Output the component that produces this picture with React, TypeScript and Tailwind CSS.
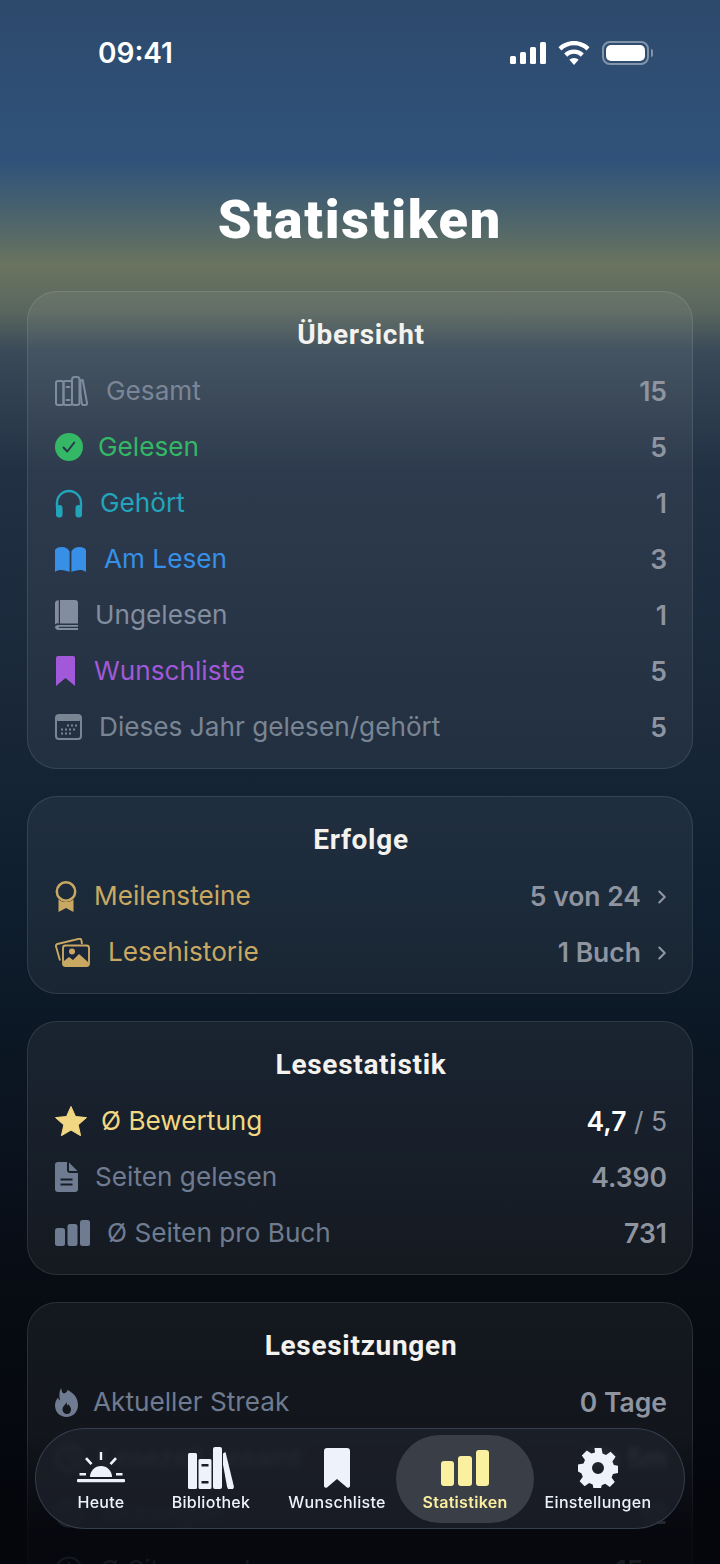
import * as React from "react";
import { ChevronRight } from "lucide-react";

const BooksOutline = () => (
  <svg viewBox="0 0 33 30" className="h-[30px] w-[33px] text-[#7f8c9f]" fill="none" stroke="currentColor" strokeWidth="2" strokeLinejoin="round" strokeLinecap="round">
    <rect x="1" y="5" width="7.500" height="24" rx="2" />
    <rect x="8.500" y="5" width="8.500" height="24" rx="2" />
    <rect x="17" y="1" width="7.500" height="28" rx="2.500" />
    <path d="M25.500 4.500l2.200-.6 4.500 24-1 1h-3.500l-1-1.500L25.500 17z" />
    <path d="M11.500 11h3M11.500 24h3" />
  </svg>
);

const CheckCircle = () => (
  <svg viewBox="0 0 28 28" className="h-7 w-7">
    <circle cx="14" cy="14" r="14" fill="#34b866" />
    <path d="M8.500 14.500l3.800 4 7-9" fill="none" stroke="#27384a" strokeWidth="2" strokeLinecap="round" strokeLinejoin="round" />
  </svg>
);

const Headphones = () => (
  <svg viewBox="0 0 28 29" className="h-[29px] w-7">
    <path d="M2 19v-5a12 12 0 0 1 24 0v5" fill="none" stroke="currentColor" strokeWidth="2.400" />
    <rect x="1" y="16" width="6.500" height="12.500" rx="3" fill="currentColor" />
    <rect x="20.500" y="16" width="6.500" height="12.500" rx="3" fill="currentColor" />
  </svg>
);

const BookOpen = () => (
  <svg viewBox="0 0 31 25" className="h-[25px] w-[31px]" fill="currentColor">
    <path d="M14.600 4.500C13.500 1.800 10.500 0 6.500 0 3.500 0 1 1 0 3V25c2-1.500 3.700-2 5.800-2 3.500 0 6.700 1 8.800 2z" />
    <path d="M16.400 4.500C17.500 1.800 20.500 0 24.500 0c3 0 5.500 1 6.500 3V25c-2-1.500-3.700-2-5.800-2-3.500 0-6.700 1-8.800 2z" />
  </svg>
);

const BookClosed = () => (
  <svg viewBox="0 0 23 30" className="h-[30px] w-[23px]" fill="currentColor">
    <path d="M5 0h15a3 3 0 0 1 3 3v20.500H5V0z" />
    <path d="M3.800.2V23.500A3.500 3.500 0 0 0 0 24.500V3.500A3.500 3.500 0 0 1 3.800.2z" />
    <path d="M3.500 25h19.500v1.800H4a1.200 1.200 0 0 0 0 1.200h19V30H3.500A3.500 3.500 0 0 1 0 27c0-1 1.500-2 3.500-2z" />
  </svg>
);

const BookmarkIcon = () => (
  <svg viewBox="0 0 19 30" className="ml-[1px] h-[30px] w-[19px]" fill="currentColor">
    <path d="M2 0h15a2 2 0 0 1 2 2v28l-9.500-8L0 30V2a2 2 0 0 1 2-2z" />
  </svg>
);

const CalendarIcon = () => (
  <svg viewBox="0 0 27 26" className="h-[26px] w-[27px]">
    <rect x="1" y="1" width="25" height="24" rx="3" fill="none" stroke="currentColor" strokeWidth="2" />
    <rect x="1" y="1" width="25" height="6" rx="2" fill="currentColor" />
    <g fill="currentColor">
      <rect x="12" y="10.500" width="2" height="2" /><rect x="16" y="10.500" width="2" height="2" /><rect x="20" y="10.500" width="2" height="2" />
      <rect x="6" y="14.500" width="2" height="2" /><rect x="10" y="14.500" width="2" height="2" /><rect x="14" y="14.500" width="2" height="2" /><rect x="18" y="14.500" width="2" height="2" />
      <rect x="6" y="18.500" width="2" height="2" /><rect x="10" y="18.500" width="2" height="2" /><rect x="14" y="18.500" width="2" height="2" />
    </g>
  </svg>
);

const Medal = () => (
  <svg viewBox="0 0 22 31" className="h-[31px] w-[22px]" fill="currentColor">
    <circle cx="11" cy="10.500" r="9.200" fill="none" stroke="currentColor" strokeWidth="2.500" />
    <path d="M3.500 18.500c2.200 1.700 4.700 2.500 7.500 2.500s5.300-.8 7.500-2.500v12.500L11 27l-7.500 4z" />
  </svg>
);

const Photos = () => (
  <svg viewBox="0 0 35 29" className="h-[29px] w-[35px]">
    <path d="M5 22.500 1 8.500a2 2 0 0 1 1.400-2.500L24 .8a2 2 0 0 1 2.400 1.400L27 6" fill="none" stroke="currentColor" strokeWidth="1.900" />
    <rect x="8" y="7.500" width="26" height="20.500" rx="2.500" fill="#1a2639" stroke="currentColor" strokeWidth="1.900" />
    <circle cx="17" cy="13.500" r="3" fill="currentColor" />
    <path d="M9 27v-4l5-4 4 3 6-6 9 8v3z" fill="currentColor" />
  </svg>
);

const Star = () => (
  <svg viewBox="0 0 32 30" className="h-[30px] w-8" fill="currentColor">
    <path d="M16 .5l4.500 10 11 1.100-8.300 7.300 2.400 10.800L16 24.100 6.400 29.700l2.400-10.800L.5 11.600l11-1.100z" stroke="currentColor" strokeLinejoin="round" />
  </svg>
);

const DocIcon = () => (
  <svg viewBox="0 0 23 30" className="h-[30px] w-[23px]" fill="currentColor">
    <path fillRule="evenodd" d="M3 0h9v8a3 3 0 0 0 3 3h8v16a3 3 0 0 1-3 3H3a3 3 0 0 1-3-3V3a3 3 0 0 1 3-3zM5.500 16.500v2h12v-2zM5.500 21.500v2h12v-2z" />
    <path d="M14 .5 22.500 9H15a1 1 0 0 1-1-1z" />
  </svg>
);

const BarsIcon = () => (
  <svg viewBox="0 0 35 26" className="h-[26px] w-[35px]" fill="currentColor">
    <rect x="0" y="8" width="10" height="18" rx="2.500" />
    <rect x="12.500" y="4" width="10" height="22" rx="2.500" />
    <rect x="25" y="0" width="10" height="26" rx="2.500" />
  </svg>
);

const Flame = () => (
  <svg viewBox="0 0 23 29" className="h-[29px] w-[23px]">
    <path fillRule="evenodd" fill="currentColor" d="M6 0c1 3 .5 4.500 3 5.500C13 4 12 2 12.500 2 19 5 23 10 23 17c0 7-5 12-11.500 12S0 24 0 17.500c0-3 1-5.500 3-8 .5 1.500 1 2.500 2 3C4 8 4 4 6 0zM11.500 14c-.5 2.500-4 4-4 7.500 0 2.500 2 4.500 4.500 4.500s4-2 4-4.500c0-3-2-3.500-2.500-5.500-.5 1-1 1.500-1.500 1.500 0-1-.2-2.500-.5-3.500z" />
  </svg>
);

const ClockIcon = () => (
  <svg viewBox="0 0 28 28" className="h-7 w-7" fill="none" stroke="currentColor" strokeWidth="2.200" strokeLinecap="round">
    <circle cx="14" cy="14" r="12.500" />
    <path d="M14 7v7l5 3" />
  </svg>
);

type Row = {
  icon: React.ReactNode;
  label: string;
  value: React.ReactNode;
  color: string;
  gap: string;
  chevron?: boolean;
};

const overview: Row[] = [
  { icon: <BooksOutline />, label: "Gesamt", value: "15", color: "text-[#7a8698]", gap: "gap-[18px]" },
  { icon: <CheckCircle />, label: "Gelesen", value: "5", color: "text-[#34b866]", gap: "gap-[15px]" },
  { icon: <Headphones />, label: "Gehört", value: "1", color: "text-[#22a5ba]", gap: "gap-[17px]" },
  { icon: <BookOpen />, label: "Am Lesen", value: "3", color: "text-[#378fe6]", gap: "gap-[18px]" },
  { icon: <BookClosed />, label: "Ungelesen", value: "1", color: "text-[#828d9e]", gap: "gap-[17px]" },
  { icon: <BookmarkIcon />, label: "Wunschliste", value: "5", color: "text-[#a259d9]", gap: "gap-[19px]" },
  { icon: <CalendarIcon />, label: "Dieses Jahr gelesen/gehört", value: "5", color: "text-[#7a8593]", gap: "gap-[17px]" },
];

const achievements: Row[] = [
  { icon: <Medal />, label: "Meilensteine", value: "5 von 24", color: "text-[#c9a862]", gap: "gap-[17px]", chevron: true },
  { icon: <Photos />, label: "Lesehistorie", value: "1 Buch", color: "text-[#c9a862]", gap: "gap-[18px]", chevron: true },
];

const reading: Row[] = [
  {
    icon: <Star />,
    label: "Ø Bewertung",
    value: (
      <>
        <span className="text-white">4,7</span>
        <span className="font-normal text-[#8d94a0]"> / 5</span>
      </>
    ),
    color: "text-[#f2d782]",
    gap: "gap-[14px]",
  },
  { icon: <DocIcon />, label: "Seiten gelesen", value: "4.390", color: "text-[#6f7b90]", gap: "gap-[17px]" },
  { icon: <BarsIcon />, label: "Ø Seiten pro Buch", value: "731", color: "text-[#6f7b90]", gap: "gap-[17px]" },
];

const sessions: Row[] = [
  { icon: <Flame />, label: "Aktueller Streak", value: "0 Tage", color: "text-[#6f7b90]", gap: "gap-[15px]" },
  { icon: <ClockIcon />, label: "Lesezeit gesamt", value: "3h 5m", color: "text-[#6f7b90]", gap: "gap-[17px]" },
  { icon: <ClockIcon />, label: "Sitzungen", value: "12", color: "text-[#6f7b90]", gap: "gap-[17px]" },
  { icon: <ClockIcon />, label: "Ø Sitzungsdauer", value: "15m", color: "text-[#6f7b90]", gap: "gap-[17px]" },
];

function Card({ title, rows }: { title: string; rows: Row[] }) {
  return (
    <section className="shrink-0 rounded-[30px] border border-white/[0.1] bg-white/[0.055] pb-[13px] pl-[27px] pr-[25px] pt-[28px]">
      <h2 className="mb-[13px] h-[30px] text-center font-['Roboto'] text-[28px] font-bold leading-[30px] tracking-[0.7px] text-[#f3f2ee]">{title}</h2>
      {rows.map((row) => (
        <div key={row.label} className={`flex h-14 items-center ${row.gap} ${row.color}`}>
          {row.icon}
          <span className="pb-[1px] text-[26.200px] leading-[32px]">{row.label}</span>
          <span className="ml-auto flex items-center gap-[10px] pb-[1px] text-[26.500px] font-semibold leading-[32px] text-[#8e94a0]">
            <span>{row.value}</span>
            {row.chevron && <ChevronRight className="-mr-[6px] mt-[2px] h-[22px] w-[22px] text-[#9298a3]" strokeWidth={2.200} />}
          </span>
        </div>
      ))}
    </section>
  );
}

const navItems = [
  {
    label: "Heute",
    width: "w-[86px]",
    icon: (
      <svg viewBox="0 0 48 32" className="h-8 w-12" fill="currentColor">
        <path d="M13 25a11 11 0 0 1 22 0z" />
        <rect x="0" y="27" width="48" height="3.200" rx="1" />
        <path d="M22.800 0h2.400v8h-2.400zM8 7l2-1.800 5.500 6-2 1.800zM40 7l-2-1.800-5.500 6 2 1.800zM2.500 21h6.500v2.600H2.500zM39 21h6.500v2.600H39z" />
      </svg>
    ),
  },
  {
    label: "Bibliothek",
    width: "w-[134px]",
    icon: (
      <svg viewBox="0 0 46 42" className="h-[42px] w-[46px]" fill="currentColor">
        <rect x="0" y="6" width="9" height="36" rx="1.500" />
        <path fillRule="evenodd" d="M12 12h10a1.500 1.500 0 0 1 1.500 1.500V40.500A1.500 1.500 0 0 1 22 42H12a1.500 1.500 0 0 1-1.500-1.500V13.500A1.500 1.500 0 0 1 12 12zM13.500 17v2.500h7V17zM13.500 34v2.500h7V34z" />
        <rect x="25" y="0" width="9" height="42" rx="2" />
        <path d="M35 6.500l2.500-1.500 8.500 35-1 2h-5l-1-2.500-4-22z" />
      </svg>
    ),
  },
  {
    label: "Wunschliste",
    width: "w-[118px]",
    icon: (
      <svg viewBox="0 0 26 40" className="h-10 w-[26px]" fill="currentColor">
        <path d="M3 0h20a3 3 0 0 1 3 3v35a2 2 0 0 1-3 1.500L13 31 3 39.500A2 2 0 0 1 0 38V3a3 3 0 0 1 3-3z" />
      </svg>
    ),
  },
  {
    label: "Statistiken",
    width: "w-[138px]",
    active: true,
    icon: (
      <svg viewBox="0 0 48 36" className="h-9 w-12" fill="currentColor">
        <rect x="0" y="11" width="13" height="25" rx="3" />
        <rect x="17" y="6" width="14" height="30" rx="3" />
        <rect x="35" y="0" width="13" height="36" rx="3" />
      </svg>
    ),
  },
  {
    label: "Einstellungen",
    width: "w-[128px]",
    icon: (
      <svg viewBox="0 0 40 40" className="h-10 w-10" fill="currentColor">
        <path
          fillRule="evenodd"
          d="M16.500 0h7l1 5.500 3.500 1.500 4.600-3.200 5 5-3.200 4.600 1.500 3.500 4.600 1v7l-5.500 1-1.400 3.500 3.200 4.600-5 5-4.600-3.200-3.500 1.500-1 4.700h-7l-1-5.500-3.500-1.400-4.600 3.200-5-5 3.200-4.600-1.500-3.500L0 23.500v-7l5.500-1 1.500-3.500-3.200-4.600 5-5L13.400 5.600 17 4.500zM20 14a6 6 0 1 0 0 12 6 6 0 0 0 0-12z"
        />
      </svg>
    ),
  },
];

export default function App() {
  return (
    <div className="relative h-[1564px] w-[720px] overflow-hidden bg-[linear-gradient(180deg,#2d4a6c_0px,#30527a_160px,#45606f_205px,#6a745f_265px,#5a675f_310px,#3a4a58_350px,#223044_470px,#182638_720px,#0f1f30_880px,#0c1825_1020px,#0a111c_1180px,#070b12_1300px,#04060c_1564px)] font-['Inter'] text-white">
      <header className="flex h-[106px] items-center justify-between pl-[98px] pr-[67px]">
        <span className="text-[28px] font-semibold leading-none">09:41</span>
        <div className="flex items-center gap-[12px]">
          <svg viewBox="0 0 36 22" className="h-[22px] w-9" fill="currentColor">
            <rect x="0" y="14" width="6" height="8" rx="1.500" />
            <rect x="10" y="10" width="6" height="12" rx="1.500" />
            <rect x="20" y="5" width="6" height="17" rx="1.500" />
            <rect x="30" y="0" width="6" height="22" rx="1.500" />
          </svg>
          <svg viewBox="0 0 32 24" className="h-6 w-8" fill="currentColor">
            <path d="M16 0c6 0 11.500 2.300 15.500 6.200L28.600 9.600C25.300 6.300 20.900 4.300 16 4.300S6.700 6.300 3.400 9.600L.5 6.200C4.500 2.300 10 0 16 0z" />
            <path d="M16 8.500c3.800 0 7.300 1.500 9.800 4l-3 3.300C21 14 18.600 12.800 16 12.800S11 14 9.200 15.800l-3-3.300c2.500-2.500 6-4 9.800-4z" />
            <path d="M16 17c1.800 0 3.400.7 4.600 1.800L16 24l-4.600-5.200C12.600 17.700 14.200 17 16 17z" />
          </svg>
          <div className="flex items-center gap-[2px]">
            <div className="flex h-[24px] w-[47px] items-center justify-center rounded-[8px] border-2 border-white/40 p-[2px]">
              <div className="h-full w-full rounded-[5px] bg-white" />
            </div>
            <div className="h-[8px] w-[2px] rounded-r-sm bg-white/40" />
          </div>
        </div>
      </header>

      <h1 className="mb-[37px] mt-[80px] h-[68px] text-center font-['Roboto'] text-[54px] font-black leading-[68px] tracking-[1.800px]">Statistiken</h1>

      <main className="flex flex-col gap-[27px] px-[27px]">
        <Card title="Übersicht" rows={overview} />
        <Card title="Erfolge" rows={achievements} />
        <Card title="Lesestatistik" rows={reading} />
        <Card title="Lesesitzungen" rows={sessions} />
      </main>

      <div className="pointer-events-none absolute inset-x-0 bottom-0 h-[130px] bg-[linear-gradient(180deg,transparent,rgba(4,6,12,0.85)_100px)]" />

      <nav className="absolute left-[35px] top-[1428px] flex h-[101px] w-[650px] items-center rounded-full border-[1.500px] border-[#3e4958]/80 bg-[#1c2029]/85 pl-[22px] backdrop-blur-[3px]">
        {navItems.map((item) => (
          <div
            key={item.label}
            className={`flex h-[88px] ${item.width} shrink-0 flex-col items-center justify-end rounded-full pb-[10px] ${item.active ? "bg-[#3a3e47] text-[#fbefa0]" : "text-[#eef2fa]"}`}
          >
            <div className="flex h-[44px] items-center">{item.icon}</div>
            <span className={`mt-[1px] whitespace-nowrap text-[16px] leading-[22px] tracking-[0.3px] ${item.active ? "font-semibold" : "font-medium"}`}>{item.label}</span>
          </div>
        ))}
      </nav>
    </div>
  );
}
